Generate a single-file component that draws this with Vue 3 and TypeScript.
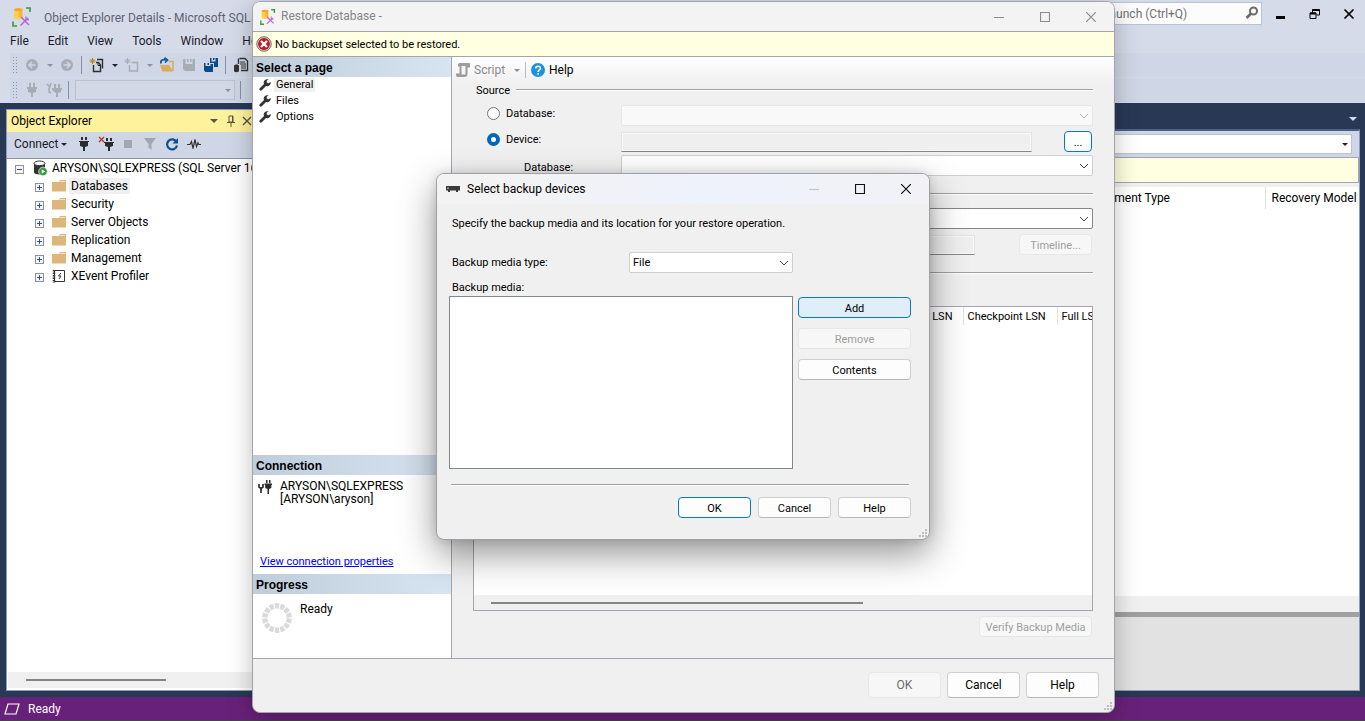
<script setup lang="ts">
import { ref } from 'vue'

const menus: string[] = ['File', 'Edit', 'View', 'Tools', 'Window', 'Help']
const folders: string[] = ['Databases', 'Security', 'Server Objects', 'Replication', 'Management']
const pages: string[] = ['General', 'Files', 'Options']
const activePage = ref('General')
const source = ref<'database' | 'device'>('device')
const mediaType = ref('File')
const spokes: number[] = Array.from({ length: 14 }, (_, i) => (i * 360) / 14)
</script>

<template>
  <div class="app">
    <header class="head">
      <div class="titlebar">
        <svg class="logo" width="20" height="20" viewBox="0 0 20 20">
          <path d="M2 2.500v8.500c0 1.600 8.500 1.600 8.500 0V2.500z" fill="#ffd04a" />
          <path d="M6.500 3.500h4v6.500h-4z" fill="#f7a823" opacity=".6" />
          <ellipse cx="6.300" cy="2.600" rx="4.300" ry="1.600" fill="#ffa32b" />
          <path d="M14 1h4v4M1 14.500V19h4" fill="none" stroke="#3c9a45" stroke-width="1.700" />
          <path d="M9 10l8 8M16 11l-7.500 7.500" stroke="#b565d8" stroke-width="1.500" fill="none" />
          <path d="M14 9.500v3h3" stroke="#b565d8" stroke-width="1.300" fill="none" />
        </svg>
        <span class="wintitle">Object Explorer Details - Microsoft SQL Server</span>
        <label class="launch">
          <input type="text" placeholder="Quick Launch (Ctrl+Q)" aria-label="Quick Launch" />
          <svg width="14" height="14" viewBox="0 0 14 14"><circle cx="8.500" cy="5" r="3.500" fill="none" stroke="#6a6a6a" stroke-width="2" /><path d="M6 7.500L1.500 12" stroke="#6a6a6a" stroke-width="2.600" /></svg>
        </label>
        <div class="winbtns">
          <button aria-label="Minimize"><svg width="12" height="12" viewBox="0 0 12 12"><path d="M1 8h9v3H1z" fill="#000" /></svg></button>
          <button aria-label="Restore"><svg width="12" height="12" viewBox="0 0 12 12" fill="none" stroke="#000"><path d="M1 5h6v5.500H1zM3.500 5V1.500h7v5.500H7.500" /><path d="M1 5.500h6M3.500 2h7" stroke-width="2" /></svg></button>
          <button aria-label="Close"><svg width="12" height="12" viewBox="0 0 12 12"><path d="M1.500 1.500l9 9M10.500 1.500l-9 9" stroke="#000" stroke-width="1.700" /></svg></button>
        </div>
      </div>
      <nav class="menu"><button v-for="m in menus" :key="m">{{ m }}</button></nav>
      <div class="tools">
        <span class="grip"></span>
        <button class="t" aria-label="Back"><svg width="14" height="14" viewBox="0 0 14 14"><circle cx="7" cy="7" r="6" fill="#a8acb5" /><path d="M10.500 7h-6M7 4L4 7l3 3" stroke="#d0d6e4" stroke-width="1.600" fill="none" /></svg></button>
        <i class="arr dim"></i>
        <button class="t" aria-label="Forward"><svg width="14" height="14" viewBox="0 0 14 14"><circle cx="7" cy="7" r="6" fill="#a8acb5" /><path d="M3.500 7h6M7 4l3 3-3 3" stroke="#d0d6e4" stroke-width="1.600" fill="none" /></svg></button>
        <i class="sep"></i>
        <button class="t" aria-label="New query">
          <svg width="16" height="16" viewBox="0 0 16 16"><path d="M8 2.500h5.500v9M4.500 8v6.500h7V8L9.500 5.500H7" fill="none" stroke="#2d2d30" stroke-width="1.400" /><path d="M9 5.500V8.500h3" fill="none" stroke="#2d2d30" /><path d="M3.500 1v6M.5 4h6M1.500 2l4 4M5.500 2l-4 4" stroke="#c27a1a" /></svg>
        </button>
        <i class="arr"></i>
        <button class="t" aria-label="New item">
          <svg width="16" height="16" viewBox="0 0 16 16"><path d="M7.500 5.500h6v8.500h-8V8" fill="none" stroke="#a8acb5" stroke-width="1.500" /><path d="M3.500 1v6M.5 4h6M1.500 2l4 4M5.500 2l-4 4" stroke="#a8acb5" /></svg>
        </button>
        <i class="arr dim"></i>
        <button class="t" aria-label="Open">
          <svg width="16" height="16" viewBox="0 0 16 16"><path d="M1 8h9l4 6.500H3.500z" fill="#dcaa60" /><path d="M10 4.500h4V14" fill="none" stroke="#dcaa60" stroke-width="1.600" /><path d="M2 6.500C1 3 4 2 8 3M5.500.8L8.500 3 6 5.500" fill="none" stroke="#0d5c9e" stroke-width="1.700" /></svg>
        </button>
        <button class="t" aria-label="Save"><svg width="14" height="14" viewBox="0 0 14 14"><path d="M1 1h2.500v5h7V1H13v12H3l-2-2zM5 1h1.500v3H5zM8 1h1.500v3H8z" fill="#a8acb5" /></svg></button>
        <button class="t" aria-label="Save all"><svg width="16" height="16" viewBox="0 0 16 16"><path d="M7 1h1.500v3.500h4V1H15v9h-4V6H7zM1 6h1.500v3h5V7H10v8H2.500L1 13.500zM10 1h1.500v2H10zM4.500 6H6v2H4.500z" fill="#0a4a86" /></svg></button>
        <i class="sep"></i>
        <button class="t" aria-label="Query document"><svg width="16" height="16" viewBox="0 0 16 16"><path d="M6.500 1.500H12L14.500 4v9.500H8M5.500 7V1.500" fill="none" stroke="#333" stroke-width="1.400" /><path d="M7 5h5M7 7h6M8 9h5M8 11h5" stroke="#333" /><path d="M1 9c0-2 5-2 5 0v5c0 1.500-5 1.500-5 0z" fill="#333" /></svg></button>
      </div>
      <div class="tools">
        <span class="grip"></span>
        <button class="t" aria-label="Connect"><svg width="10" height="14" viewBox="0 0 10 14"><path d="M2 0h2v4H2zM6 0h2v4H6zM0 4h10v2H9v3L6 10v4H4v-4L1 9V6H0z" fill="#a8acb5" /></svg></button>
        <button class="t" aria-label="Change connection"><svg width="16" height="14" viewBox="0 0 16 14"><path d="M8 1h2v4H8zM12 1h2v4h-2zM6 5h10v2h-1v2l-3 1v4h-2v-4L7 8V7H6z" fill="#a8acb5" /><path d="M1 1l3 3M5 0L3 6v3l2 1" fill="none" stroke="#a8acb5" stroke-width="1.600" /></svg></button>
        <i class="sep"></i>
        <span class="dbcombo"><i class="arr dim"></i></span>
        <i class="sep"></i>
      </div>
    </header>

    <main class="work">
      <section class="explorer">
        <div class="ehead">
          <span>Object Explorer</span>
          <div class="ehead-btns">
            <i class="arr big"></i>
            <svg width="10" height="12" viewBox="0 0 10 12"><path d="M3 1h4v6H3zM6.500 1v6M1 7.500h8M5 8v4" fill="none" stroke="#5c5536" /></svg>
            <svg width="10" height="10" viewBox="0 0 10 10"><path d="M1 1l8 8M9 1L1 9" stroke="#5c5536" stroke-width="1.400" /></svg>
          </div>
        </div>
        <div class="etools">
          <button class="connect">Connect <i class="arr tight"></i></button>
          <button class="t" aria-label="Connect object explorer"><svg width="10" height="14" viewBox="0 0 10 14"><path d="M2 0h2v3H2zM6 0h2v3H6zM0 4h10v1H9v4L6 10v4H4v-4L1 9V5H0z" fill="#2b2b2b" /></svg></button>
          <button class="t" aria-label="Disconnect"><svg width="16" height="16" viewBox="0 0 16 16"><path d="M8 2h2v3H8zM12 2h2v3h-2zM6 6h10v1h-1v3l-3 1v4h-2v-4l-3-1V7H6z" fill="#2b2b2b" /><path d="M1 1l5 5M6 1L1 6" stroke="#b23b22" stroke-width="1.300" /></svg></button>
          <button class="t" aria-label="Stop"><svg width="8" height="8"><path d="M0 0h8v8H0z" fill="#a3a7b0" /></svg></button>
          <button class="t" aria-label="Filter"><svg width="12" height="12" viewBox="0 0 12 12"><path d="M0 0h12L7.500 6v6l-3-2.500V6z" fill="#a3a7b0" /></svg></button>
          <button class="t" aria-label="Refresh"><svg width="14" height="14" viewBox="0 0 14 14"><path d="M11.500 5A5 5 0 1 0 12 8.500" fill="none" stroke="#0d4f92" stroke-width="2.200" /><path d="M13 1v5.500H7.500z" fill="#0d4f92" /></svg></button>
          <button class="t" aria-label="Activity monitor"><svg width="14" height="12" viewBox="0 0 14 12"><path d="M0 6.500h3l1.500-3 1.500 7 2-9 1.500 7L11 5l.8 1.500H14" fill="none" stroke="#333" stroke-width="1.200" /></svg></button>
        </div>
        <ul class="tree">
          <li class="root">
            <i class="box"></i>
            <svg width="16" height="16" viewBox="0 0 16 16"><path d="M2 3v9.500c0 2.500 11 2.500 11 0V3z" fill="#333" /><ellipse cx="7.500" cy="3.300" rx="5.500" ry="2.300" fill="#fff" stroke="#333" /><circle cx="11" cy="11.500" r="4.300" fill="#2e9b3e" stroke="#fff" stroke-width=".7" /><path d="M9.700 9.200v4.600l3.600-2.300z" fill="#fff" /></svg>
            <span>ARYSON\SQLEXPRESS (SQL Server 16.0)</span>
          </li>
          <li v-for="(f, i) in folders" :key="f">
            <i class="box plus"></i>
            <svg width="14" height="12" viewBox="0 0 14 12"><path d="M0 2h7l1-2h6v11.500H0z" fill="#dcb67a" /><path d="M8 1.500h5" stroke="#f3e3c5" /></svg>
            <span :class="{ hot: i === 0 }">{{ f }}</span>
          </li>
          <li>
            <i class="box plus"></i>
            <svg width="14" height="14" viewBox="0 0 14 14"><path d="M2.500 1.500h10v11h-10z" fill="#fff" stroke="#333" /><path d="M2 1v13" stroke="#333" stroke-width="2.500" stroke-dasharray="1.500 1" /><path d="M9 4L6.500 7H9L7 10" fill="none" stroke="#333" /></svg>
            <span>XEvent Profiler</span>
          </li>
        </ul>
        <div class="hscroll"><i></i></div>
      </section>

      <section class="details">
        <div class="tabstrip"><i class="arr light"></i></div>
        <div class="dframe">
          <div class="addr"><div class="addrbox"><i class="arr tight"></i></div></div>
          <div class="info"></div>
          <table class="cols"><thead><tr><th></th><th>Containment Type</th><th>Recovery Model</th></tr></thead></table>
          <div class="dspace"></div>
          <div class="dscroll"></div>
          <div class="dbottom"></div>
        </div>
      </section>
    </main>

    <footer class="status">
      <svg width="16" height="12" viewBox="0 0 16 12"><path d="M4 1h11l-3 10H1z" fill="none" stroke="#fff" stroke-width="1.200" /></svg>
      <span>Ready</span>
    </footer>

    <div class="restore" role="dialog" aria-label="Restore Database">
      <div class="rtitle">
        <svg class="rlogo" width="16" height="16" viewBox="0 0 20 20">
          <path d="M2 2.500v8.500c0 1.600 8.500 1.600 8.500 0V2.500z" fill="#ffd04a" />
          <path d="M6.500 3.500h4v6.500h-4z" fill="#f7a823" opacity=".6" />
          <ellipse cx="6.300" cy="2.600" rx="4.300" ry="1.600" fill="#ffa32b" />
          <path d="M14 1h4v4M1 14.500V19h4" fill="none" stroke="#3c9a45" stroke-width="1.700" />
          <path d="M9 10l8 8M16 11l-7.500 7.500" stroke="#b565d8" stroke-width="1.500" fill="none" />
          <path d="M14 9.500v3h3" stroke="#b565d8" stroke-width="1.300" fill="none" />
        </svg>
        <span>Restore Database -</span>
        <div class="caption dimmed">
          <button aria-label="Minimize"><svg width="10" height="10"><path d="M0 5.500h10" /></svg></button>
          <button aria-label="Maximize"><svg width="10" height="10"><path d="M.5.500h9v9h-9z" /></svg></button>
          <button aria-label="Close"><svg width="10" height="10"><path d="M0 0l10 10M10 0L0 10" /></svg></button>
        </div>
      </div>
      <div class="warn">
        <svg width="16" height="16" viewBox="0 0 16 16"><circle cx="8" cy="8" r="7.300" fill="#c8c8c8" stroke="#7b7b7b" /><circle cx="8" cy="8" r="5.900" fill="#c4161c" /><path d="M5 5l6 6M11 5l-6 6" stroke="#fff" stroke-width="2.300" /></svg>
        <span>No backupset selected to be restored.</span>
      </div>
      <div class="rbody">
        <aside class="side">
          <h3>Select a page</h3>
          <ul class="pages">
            <li v-for="p in pages" :key="p">
              <svg width="12" height="12" viewBox="0 0 12 12"><path d="M1.800 10.200L7 5" stroke="#333" stroke-width="2.800" stroke-linecap="round" /><path d="M9.800.6A3.500 3.500 0 1 0 11.600 3L9.500 4.300 7.700 3.400 7.900 1.600z" fill="#333" /></svg>
              <button :class="{ on: p === activePage }" @click="activePage = p">{{ p }}</button>
            </li>
          </ul>
          <h3>Connection</h3>
          <div class="conn">
            <svg width="14" height="14" viewBox="0 0 14 14"><path d="M8 0h1.500v3H8zM11 0h1.500v3H11zM6.500 3.500H14V5h-.7v3L11 9v5H9.500V9L7.200 8V5h-.7z" fill="#2b2b2b" /><path d="M1 4v3l2 1.500L5 7V4M3 8v5" fill="none" stroke="#2b2b2b" stroke-width="1.700" /></svg>
            <p>ARYSON\SQLEXPRESS<br />[ARYSON\aryson]</p>
            <a href="#">View connection properties</a>
          </div>
          <h3>Progress</h3>
          <div class="prog">
            <svg width="30" height="30" viewBox="-15 -15 30 30"><path v-for="a in spokes" :key="a" d="M-2.600 -14.500Q0 -15.400 2.600 -14.500L1.800 -9.500H-1.800z" fill="#dadada" :transform="`rotate(${a})`" /></svg>
            <span>Ready</span>
          </div>
        </aside>

        <div class="pane">
          <div class="ptools">
            <button class="script" disabled>
              <svg width="14" height="14" viewBox="0 0 14 14"><path d="M3.500 0H13a1 1 0 0 1 1 1v3.500h-2.500V11a3 3 0 0 1-3 3H2a2 2 0 0 1-2-2v-1.500h3.500V3.500H2V2a2 2 0 0 1 1.500-2z" fill="#9c9c9c" /><path d="M5.500 3h4v8.500h-4z" fill="#f4f4f4" /></svg>
              Script
            </button>
            <i class="arr dim"></i>
            <i class="psep"></i>
            <button class="help">
              <svg width="14" height="14" viewBox="0 0 14 14"><circle cx="7" cy="7" r="7" fill="#1b93dc" /><path d="M4.700 5.500c0-3 4.700-3 4.700-.2C9.400 7 7.100 6.900 7.100 9" fill="none" stroke="#fff" stroke-width="1.600" /><path d="M6.300 10h1.700v1.700H6.300z" fill="#fff" /></svg>
              Help
            </button>
          </div>
          <form class="form" @submit.prevent>
            <div class="legend"><span>Source</span><hr /></div>
            <div class="row">
              <label class="radio"><input v-model="source" type="radio" name="src" value="database" />Database:</label>
              <div class="combo off"><select disabled aria-label="Source database"></select><svg width="10" height="6"><path d="M1 1l4 4 4-4" /></svg></div>
            </div>
            <div class="row dev">
              <label class="radio"><input v-model="source" type="radio" name="src" value="device" />Device:</label>
              <input class="flat" type="text" readonly aria-label="Device" />
              <button class="btn prime">...</button>
            </div>
            <div class="row">
              <label class="inner" for="ddb">Database:</label>
              <div class="combo"><select id="ddb"></select><svg width="10" height="6"><path d="M1 1l4 4 4-4" /></svg></div>
            </div>
            <div class="legend second"><span></span><hr /></div>
            <div class="row dest">
              <span></span>
              <div class="combo dark"><select aria-label="Destination database"></select><svg width="10" height="6"><path d="M1 1l4 4 4-4" /></svg></div>
            </div>
            <div class="row to">
              <span></span>
              <input class="flat" type="text" readonly aria-label="Restore to" />
              <button class="btn" disabled>Timeline...</button>
            </div>
            <div class="legend third"><span></span><hr /></div>
            <div class="sets">
              <table><thead><tr><th class="fill">Last LSN</th><th class="cp">Checkpoint LSN</th><th class="full">Full LSN</th></tr></thead></table>
              <div class="sscroll"><i></i></div>
            </div>
            <button class="btn verify" disabled>Verify Backup Media</button>
          </form>
        </div>
      </div>
      <div class="rfoot">
        <button class="btn" disabled>OK</button>
        <button class="btn">Cancel</button>
        <button class="btn">Help</button>
      </div>
      <svg class="resize" width="9" height="9"><path d="M6 0h2v2H6zM3 3h2v2H3zM6 3h2v2H6zM0 6h2v2H0zM3 6h2v2H3zM6 6h2v2H6z" /></svg>
    </div>

    <div class="devices" role="dialog" aria-label="Select backup devices">
      <div class="dtitle">
        <svg width="14" height="6" viewBox="0 0 14 6"><path d="M0 0h14v4.500h-2V6h-2V4.500H4V6H2V4.500H0z" fill="#3a3a3a" /><path d="M2 1.500v1.500" stroke="#fff" /></svg>
        <span>Select backup devices</span>
        <div class="caption">
          <button class="faint" aria-label="Minimize"><svg width="10" height="10"><path d="M0 5.500h10" /></svg></button>
          <button aria-label="Maximize"><svg width="10" height="10"><path d="M.5.500h9v9h-9z" /></svg></button>
          <button aria-label="Close"><svg width="10" height="10"><path d="M0 0l10 10M10 0L0 10" /></svg></button>
        </div>
      </div>
      <div class="dbody">
        <p>Specify the backup media and its location for your restore operation.</p>
        <div class="mrow">
          <label for="mtype">Backup media type:</label>
          <div class="combo"><select id="mtype" v-model="mediaType"><option>File</option></select><svg width="10" height="6"><path d="M1 1l4 4 4-4" /></svg></div>
        </div>
        <label class="mlabel" for="mlist">Backup media:</label>
        <div class="mgrid">
          <select id="mlist" multiple></select>
          <div class="mbtns">
            <button class="btn add">Add</button>
            <button class="btn" disabled>Remove</button>
            <button class="btn">Contents</button>
          </div>
        </div>
        <hr />
        <div class="dfoot">
          <button class="btn prime">OK</button>
          <button class="btn">Cancel</button>
          <button class="btn">Help</button>
        </div>
      </div>
      <svg class="resize" width="9" height="9"><path d="M6 0h2v2H6zM3 3h2v2H3zM6 3h2v2H6zM0 6h2v2H0zM3 6h2v2H3zM6 6h2v2H6z" /></svg>
    </div>
  </div>
</template>

<style>
html, body { margin: 0; background: #293955; }
</style>

<style scoped>
* { box-sizing: border-box; }
.app { position: relative; display: flex; flex-direction: column; height: 100vh; min-height: 700px; overflow: hidden; background: #293955; color: #000; font: 12px/16px Roboto, "Liberation Sans", sans-serif; }
button { font: inherit; color: inherit; border: 0; background: none; padding: 0; margin: 0; }
ul, p, h3, hr { margin: 0; padding: 0; list-style: none; }
svg { display: block; flex: none; }

/* main window header */
.head { height: 103px; flex: none; background: #d6dbe9; }
.titlebar { display: flex; align-items: center; height: 32px; padding-left: 12px; }
.wintitle { margin-left: 12px; color: #5d6273; white-space: nowrap; padding-top: 4px; }
.logo { margin-top: 2px; }
.launch { display: flex; align-items: center; margin-left: auto; width: 200px; height: 23px; margin-top: -6px; background: #fcfcfc; border: 1px solid #b9c3d8; }
.launch input { flex: 1; min-width: 0; border: 0; background: none; font: inherit; padding: 1px 0 0 4px; margin-left: 3px; outline: 0; }
.launch input::placeholder { color: #717171; opacity: 1; }
.launch svg { margin: 0 2px; }
.winbtns { display: flex; gap: 22px; padding: 0 10px 0 13px; margin-top: -4px; }
.menu { display: flex; gap: 19px; height: 20px; align-items: center; padding: 0 0 2px 10px; color: #1b1b2b; }
.tools { display: flex; align-items: center; height: 24px; margin: 1px 0 0 10px; background: #cfd6e5; }
.grip { width: 6px; height: 18px; margin: 0 3px 0 2px; background: radial-gradient(circle, #8b95ad 1px, transparent 1px) 0 0 / 3px 3px; }
.t { display: flex; justify-content: center; align-items: center; width: 22px; height: 22px; flex: none; }
.arr { display: flex; justify-content: center; width: 13px; flex: none; }
.arr::before { content: ""; border: 3px solid transparent; border-top-color: #1b2338; border-bottom: 0; }
.arr.dim::before { border-top-color: #8d919b; }
.arr.big::before { border-width: 4px 4px 0; border-top-color: #5c5536; }
.arr.light::before { border-width: 4px 4px 0; border-top-color: #d6dbe9; }
.arr.tight { width: 8px; }
.sep { width: 8px; height: 18px; flex: none; }
.sep::before { content: ""; display: block; width: 1px; height: 18px; margin-left: 3px; background: #8591aa; }
.dbcombo { display: flex; align-items: center; justify-content: flex-end; width: 160px; height: 20px; margin: 0 2px; background: #d2d8e6; border: 1px solid #b9c1d3; }

/* work area */
.work { flex: 1; min-height: 0; display: flex; gap: 6px; padding: 6px 5px 6px 6px; }
.explorer { width: 420px; flex: none; display: flex; flex-direction: column; border: 1px solid #8e9bbc; background: #fff; }
.ehead { display: flex; align-items: center; height: 22px; padding-left: 4px; background: #fff29d; }
.ehead-btns { display: flex; align-items: center; gap: 6px; margin-left: 115px; }
.etools { display: flex; align-items: center; height: 26px; padding: 0 0 2px 7px; background: #cfd6e5; color: #1b1b2b; }
.connect { display: flex; align-items: center; gap: 2px; width: 59px; white-space: nowrap; }
.tree { flex: 1; padding: 0 0 0 8px; border-top: 1px solid #8a92a8; }
.tree li { display: flex; align-items: center; height: 18px; padding-left: 20px; white-space: nowrap; }
.tree .root { padding-left: 0; }
.tree span { margin-left: 3px; padding: 0 2px; }
.tree .root span { margin-left: 2px; }
.tree svg { margin-left: 7px; }
.hot { background: #f0f0f0; }
.box { position: relative; width: 9px; height: 9px; margin-top: 2px; border: 1px solid #919191; background: linear-gradient(#2f4f9a, #2f4f9a) center / 5px 1px no-repeat, #f6f6f6; }
.box.plus { background: linear-gradient(#2f4f9a, #2f4f9a) center / 5px 1px no-repeat, linear-gradient(#2f4f9a, #2f4f9a) center / 1px 5px no-repeat, #f6f6f6; }
.tree .box + svg { margin-left: 8px; }
.hscroll { display: flex; align-items: center; height: 16px; margin: 0 1px 2px; padding-left: 18px; background: #f0f0f0; }
.hscroll i { width: 140px; height: 2px; background: #858585; }
.details { flex: 1; min-width: 0; display: flex; flex-direction: column; }
.tabstrip { display: flex; align-items: center; justify-content: flex-end; height: 20px; }
.tabstrip .arr { margin-right: 1px; }
.dframe { flex: 1; display: flex; flex-direction: column; border: 1px solid #8e9bbc; border-top: 2px solid #4d6082; background: #fff; }
.addr { height: 26px; padding: 3px 7px 3px 0; background: #cfd6e5; }
.addrbox { display: flex; align-items: center; justify-content: flex-end; height: 20px; padding-right: 2px; background: #fff; border: 1px solid #b9c3d8; }
.info { height: 26px; background: #ffffe1; border: 1px solid #a5a5ae; border-left: 0; }
.cols { width: 100%; table-layout: fixed; border-collapse: collapse; border-top: 4px solid #f0f0f0; }
.cols th { height: 24px; padding: 0 0 0 6px; font-weight: 400; text-align: left; white-space: nowrap; }
.cols th:nth-child(2) { width: 198px; }
.cols th:last-child { width: 94px; border-left: 1px solid #e2e2e2; }
.dspace { flex: 1; }
.dscroll { height: 16px; background: #f0f0f0; }
.dbottom { height: 78px; border-top: 5px solid #a0a0a0; background: #e2e2e2; }
.status { display: flex; align-items: center; gap: 8px; height: 24px; flex: none; padding-left: 4px; background: #68217a; border-bottom: 1px solid #444; color: #fff; }

/* shared dialog controls */
.caption { display: flex; margin-left: auto; }
.caption button { display: grid; place-items: center; width: 46px; height: 28px; }
.caption path { fill: none; stroke: #111; stroke-width: 1.2; }
.caption.dimmed path { stroke: #8c8c8c; }
.caption .faint path { stroke: #c2c5cc; }
.btn { height: 21px; padding-top: 1px; border: 1px solid #d0d0d0; border-bottom-color: #b8b8b8; border-radius: 4px; background: #fdfdfd; text-align: center; white-space: nowrap; }
.btn:disabled { color: #9f9f9f; border-color: #e6e6e6; background: #f7f7f7; }
.btn.prime, .btn.add { border-color: #0078d4; }
.btn.add { background: #e0eef9; }
.combo { display: grid; align-items: center; height: 21px; }
.combo > * { grid-area: 1 / 1; }
.combo select { appearance: none; width: 100%; height: 21px; margin: 0; padding: 0 3px; border: 1px solid #cfcfcf; border-radius: 2px; background: #fff; font: inherit; color: #000; opacity: 1; }
.combo svg { justify-self: end; margin-right: 4px; pointer-events: none; }
.combo path { fill: none; stroke: #444; }
.combo.off select { background: #f9f9f9; border-color: #e6e6e6; }
.combo.off path { stroke: #b0b0b0; }
.combo.dark select { border-color: #868686; }
.flat { width: 100%; height: 20px; border: 1px solid #e3e3e3; border-bottom-color: #868686; border-radius: 0; background: #efefef; box-shadow: inset 0 0 0 1px #fafafa; outline: 0; }
.resize { position: absolute; right: 1px; bottom: 1px; fill: #bdbdbd; }

/* restore dialog */
.restore { position: absolute; left: 252px; right: 250px; top: 1px; bottom: 8px; display: flex; flex-direction: column; overflow: hidden; border: 1px solid #a4a4aa; border-radius: 8px; background: #f0f0f0; box-shadow: 0 6px 24px rgba(0, 0, 0, .26); font-size: 11px; line-height: 13px; }
.rtitle { display: flex; align-items: center; height: 29px; flex: none; padding-left: 7px; background: #f3f3f3; color: #858585; font-size: 12px; }
.rtitle > span { margin-left: 5px; }
.warn { display: flex; align-items: center; gap: 3px; height: 26px; flex: none; padding-left: 3px; background: #ffffe1; border: solid #a5a5ae; border-width: 1px 0; }
.rbody { flex: 1; min-height: 0; display: flex; border-bottom: 1px solid #a5a5ae; }
.side { width: 199px; flex: none; display: flex; flex-direction: column; background: #fff; border-right: 1px solid #a5a5ae; }
.side h3 { height: 20px; flex: none; padding-left: 3px; font: bold 12px/22px "Liberation Sans", sans-serif; background: linear-gradient(90deg, #bfcddb, #d7e4f2); }
.pages { flex: 1; padding: 0 0 0 6px; }
.pages li { display: flex; align-items: center; gap: 3px; height: 16px; }
.pages button { padding: 0 2px; line-height: 14px; }
.pages .on { background: #f0f0f0; }
.conn { display: grid; grid-template-columns: 22px 1fr; align-content: space-between; height: 99px; padding: 5px 5px 6px; }
.conn p { font-size: 12px; }
.conn a { grid-column: 1 / 3; padding-left: 2px; color: #00f; }
.prog { display: flex; gap: 8px; height: 64px; padding: 9px; }
.prog span { font-size: 12px; }
.pane { flex: 1; min-width: 0; display: flex; flex-direction: column; }
.ptools { display: flex; align-items: center; height: 26px; flex: none; padding-left: 4px; background: linear-gradient(#fff, #f0f0f0); font-size: 12px; }
.ptools button { display: flex; align-items: center; gap: 4px; }
.ptools .script { color: #8a8a8a; width: 54px; }
.psep { width: 1px; height: 16px; margin: 0 5px 0 2px; background: #bdbdbd; }
.form { flex: 1; min-height: 0; display: flex; flex-direction: column; padding: 0 21px 21px 21px; }
.legend { display: flex; align-items: center; height: 14px; gap: 6px; padding-left: 3px; }
.legend hr { flex: 1; height: 2px; border: 0; border-top: 1px solid #a0a0a0; border-bottom: 1px solid #fff; }
.row { display: grid; grid-template-columns: 148px 1fr; align-items: center; margin-top: 8px; }
.row.dev { grid-template-columns: 148px 1fr 28px; margin-top: 5px; padding-right: 1px; }
.row.dev + .row { margin-top: 3px; }
.dev .flat { width: calc(100% - 32px); }
.radio { display: flex; align-items: center; gap: 6px; padding: 0 0 4px 14px; }
.radio input { appearance: none; width: 13px; height: 13px; margin: 0; border: 1px solid #777; border-radius: 50%; background: #fff; }
.radio input:checked { border: 4px solid #0067c0; }
.inner { padding: 3px 0 0 51px; }
.second, .third { margin-top: 11px; }
.dest { margin-top: 7px; }
.row.to { grid-template-columns: 148px 1fr 73px; margin-top: 5px; padding-right: 1px; }
.to .flat { width: calc(100% - 44px); }
.sets { flex: 1; display: flex; flex-direction: column; justify-content: space-between; margin-top: 26px; overflow: hidden; border: 1px solid #a5a5ae; background: #fff; }
.sets table { width: 100%; table-layout: fixed; border-collapse: collapse; }
.sets th { height: 18px; padding: 0 4px; font-weight: 400; text-align: left; white-space: nowrap; overflow: hidden; }
.sets th.fill { padding-right: 10px; text-align: right; }
.cp { width: 94px; border-left: 1px solid #e2e2e2; }
.full { width: 35px; border-left: 1px solid #e2e2e2; }
.sets th.full { padding-right: 0; }
.sscroll { display: flex; align-items: center; height: 15px; padding-left: 17px; background: #f0f0f0; }
.sscroll i { width: 372px; height: 2px; background: #858585; }
.verify { align-self: flex-end; width: 113px; margin: 5px 1px 0 0; flex: none; }
.rfoot { display: flex; justify-content: flex-end; gap: 6px; flex: none; padding: 13px 15px 14px; font-size: 12px; }
.rfoot .btn { width: 73px; height: 26px; }
.rfoot .btn:disabled { color: #6d6d6d; }

/* backup device dialog */
.devices { position: absolute; left: 436px; top: 173px; width: 494px; border: 1px solid #a0a0a4; border-radius: 8px; background: #f0f0f0; box-shadow: 0 14px 36px rgba(0, 0, 0, .42), 0 0 10px rgba(0, 0, 0, .12); font-size: 11px; line-height: 13px; }
.dtitle { display: flex; align-items: center; gap: 7px; height: 30px; padding-left: 9px; border-radius: 7px 7px 0 0; background: linear-gradient(90deg, #f3f3f3 10%, #eef2fb 55%, #f2f2f6); font-size: 12px; }
.dbody { padding: 13px 18px 21px 12px; }
.dbody p { padding-left: 3px; }
.mrow { display: grid; grid-template-columns: 177px 164px; align-items: center; margin-top: 22px; padding-left: 3px; }
.mlabel { display: block; margin: 8px 0 2px 3px; }
.mgrid { display: grid; grid-template-columns: 1fr 113px; gap: 5px; }
.mgrid select { width: 100%; height: 173px; margin: 0; border: 1px solid #828790; border-radius: 0; background: #fff; outline: 0; }
.mbtns { display: flex; flex-direction: column; gap: 10px; padding-top: 1px; }
.dbody hr { height: 2px; margin: 15px 2px 0 2px; border: 0; border-top: 1px solid #a0a0a0; border-bottom: 1px solid #fff; }
.dfoot { display: flex; justify-content: flex-end; gap: 7px; margin-top: 11px; }
.dfoot .btn { width: 73px; }
</style>
